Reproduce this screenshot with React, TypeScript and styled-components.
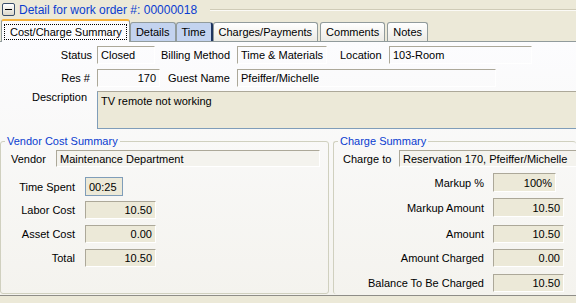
import React from 'react'
import styled, { createGlobalStyle } from 'styled-components'

const GlobalStyle = createGlobalStyle`
  html, body {
    margin: 0;
    padding: 0;
    background: #ece9d8;
  }
  body {
    font-family: 'Liberation Sans', Arial, sans-serif;
    font-size: 11px;
    color: #000;
  }
`

const Window = styled.div`
  width: 576px;
  height: 303px;
  overflow: hidden;
  background: #ece9d8;
  display: flex;
  flex-direction: column;
`

const Header = styled.div`
  height: 17px;
  display: flex;
  align-items: center;
  padding-left: 2px;
  margin-top: 1px;
`

const Toggle = styled.div`
  width: 11px;
  height: 11px;
  border: 1px solid #3b4f6b;
  border-radius: 2px;
  background: linear-gradient(#ffffff, #dcd9cc);
  display: flex;
  align-items: center;
  justify-content: center;
  &::after {
    content: '';
    width: 7px;
    height: 1px;
    background: #000;
  }
`

const HeaderTitle = styled.span`
  margin-left: 4px;
  color: #0a3cd0;
  font-size: 12px;
  white-space: nowrap;
`

const HeaderRule = styled.div`
  flex: 1;
  margin-left: 13px;
  height: 0;
  border-top: 1px solid #cfcbb7;
  border-bottom: 1px solid #fbfaf6;
`

const TabStrip = styled.div`
  display: flex;
  align-items: flex-end;
  height: 22px;
  padding-left: 1px;
  margin-top: 1px;
  position: relative;
  z-index: 1;
`

const Tab = styled.div<{ $kind: 'active' | 'blue' | 'plain'; $edge?: boolean }>`
  height: ${({ $kind }) => ($kind === 'active' ? '21px' : '18px')};
  display: flex;
  align-items: center;
  justify-content: center;
  padding: 0 ${({ $kind }) => ($kind === 'active' ? '2px' : '5px')};
  margin-right: ${({ $kind }) => ($kind === 'plain' ? '2px' : '0')};
  border: 1px solid #919b9c;
  border-bottom: none;
  border-radius: 3px 3px 0 0;
  border-top: ${({ $kind }) =>
    $kind === 'active' ? '2px solid #f7b23a' : '1px solid #919b9c'};
  border-right: ${({ $edge }) => ($edge ? '2px solid #1f3560' : '1px solid #919b9c')};
  background: ${({ $kind }) =>
    $kind === 'active'
      ? '#fcfcfe'
      : $kind === 'blue'
        ? '#c3d3ef'
        : 'linear-gradient(#ffffff, #ecebe5)'};
  margin-bottom: ${({ $kind }) => ($kind === 'active' ? '-1px' : '0')};
  white-space: nowrap;
`

const FocusText = styled.span`
  border: 1px dotted #000;
  padding: 1px 4px 1px 5px;
`

const Panel = styled.div`
  height: 255px;
  border-top: 1px solid #919b9c;
  border-bottom: 1px solid #8e8d88;
  background: linear-gradient(#fcfcfe, #f4f3ee);
  display: flex;
  flex-direction: column;
  padding-top: 4px;
  box-sizing: border-box;
`

const Row = styled.div<{ $gap?: number; $top?: boolean }>`
  display: flex;
  align-items: ${({ $top }) => ($top ? 'flex-start' : 'center')};
  margin-bottom: ${({ $gap }) => $gap ?? 0}px;
`

const Label = styled.div<{ $w: number; $right?: boolean; $pl?: number; $pr?: number }>`
  width: ${({ $w }) => $w}px;
  flex: none;
  box-sizing: border-box;
  text-align: ${({ $right }) => ($right ? 'right' : 'left')};
  padding-left: ${({ $pl }) => $pl ?? 0}px;
  padding-right: ${({ $pr }) => $pr ?? 0}px;
  white-space: nowrap;
`

const Field = styled.div<{
  $w: number
  $h?: number
  $right?: boolean
  $ml?: number
  $tone?: 'flat' | 'soft' | 'beige' | 'blue'
}>`
  width: ${({ $w }) => $w}px;
  height: ${({ $h }) => $h ?? 18}px;
  margin-left: ${({ $ml }) => $ml ?? 0}px;
  flex: none;
  box-sizing: border-box;
  display: flex;
  align-items: center;
  justify-content: ${({ $right }) => ($right ? 'flex-end' : 'flex-start')};
  padding: 0 ${({ $right }) => ($right ? '3px' : '0')} 0 ${({ $right }) => ($right ? '0' : '3px')};
  white-space: nowrap;
  overflow: hidden;
  background: ${({ $tone }) =>
    $tone === 'beige' || $tone === 'blue'
      ? '#ece9d8'
      : $tone === 'soft'
        ? '#f4f3ee'
        : 'transparent'};
  border: 1px solid;
  border-color: ${({ $tone }) =>
    $tone === 'blue' ? '#7f9db9' : '#aca899 #ffffff #ffffff #aca899'};
`

const DescBox = styled.div`
  width: 480px;
  height: 38px;
  flex: none;
  box-sizing: border-box;
  background: #ece9d8;
  border: 1px solid #7f9db9;
  border-top-color: #aca899;
  padding: 3px 3px;
`

const Groups = styled.div`
  display: flex;
  margin-top: 6px;
  padding-bottom: 1px;
  flex: 1;
  min-height: 0;
`

const Group = styled.fieldset<{ $w: number; $open?: boolean }>`
  width: ${({ $w }) => $w}px;
  box-sizing: border-box;
  margin: 0 0 0 ${({ $open }) => ($open ? '4px' : '0')};
  padding: 0;
  border: 1px solid #d0d0bf;
  border-right-width: ${({ $open }) => ($open ? '0' : '1px')};
  border-bottom-width: ${({ $open }) => ($open ? '0' : '1px')};
  border-radius: 3px;
  min-width: 0;
`

const Legend = styled.legend`
  color: #0a3cd0;
  font-size: 11px;
  padding: 0 2px;
  margin-left: 4px;
`

const GroupBody = styled.div<{ $pl: number }>`
  display: flex;
  flex-direction: column;
  padding: 3px 0 0 ${({ $pl }) => $pl}px;
`

const vendorRows = [
  { label: 'Labor Cost', value: '10.50' },
  { label: 'Asset Cost', value: '0.00' },
  { label: 'Total', value: '10.50' },
]

const chargeRows = [
  { label: 'Markup %', value: '100%', w: 63, h: 19, gap: 6 },
  { label: 'Markup Amount', value: '10.50', w: 71, h: 19, gap: 8 },
  { label: 'Amount', value: '10.50', w: 71, h: 18, gap: 6 },
  { label: 'Amount Charged', value: '0.00', w: 71, h: 18, gap: 7 },
  { label: 'Balance To Be Charged', value: '10.50', w: 71, h: 18, gap: 0 },
]

export default function App(): JSX.Element {
  return (
    <Window>
      <GlobalStyle />
      <Header>
        <Toggle />
        <HeaderTitle>Detail for work order #: 00000018</HeaderTitle>
        <HeaderRule />
      </Header>
      <TabStrip>
        <Tab $kind="active">
          <FocusText>Cost/Charge Summary</FocusText>
        </Tab>
        <Tab $kind="blue">Details</Tab>
        <Tab $kind="blue" $edge>
          Time
        </Tab>
        <Tab $kind="plain">Charges/Payments</Tab>
        <Tab $kind="plain">Comments</Tab>
        <Tab $kind="plain">Notes</Tab>
      </TabStrip>
      <Panel>
        <Row $gap={5}>
          <Label $w={97} $right $pr={5}>
            Status
          </Label>
          <Field $w={58}>Closed</Field>
          <Label $w={82} $pl={6}>
            Billing Method
          </Label>
          <Field $w={90}>Time &amp; Materials</Field>
          <Label $w={62} $pl={13}>
            Location
          </Label>
          <Field $w={143}>103-Room</Field>
        </Row>
        <Row $gap={4}>
          <Label $w={97} $right $pr={7}>
            Res #
          </Label>
          <Field $w={63} $right>
            170
          </Field>
          <Label $w={77} $pl={8}>
            Guest Name
          </Label>
          <Field $w={259}>Pfeiffer/Michelle</Field>
        </Row>
        <Row $top>
          <Label $w={97} $pl={32}>
            Description
          </Label>
          <DescBox>TV remote not working</DescBox>
        </Row>
        <Groups>
          <Group $w={329}>
            <Legend>Vendor Cost Summary</Legend>
            <GroupBody $pl={10}>
              <Row $gap={10}>
                <Label $w={45}>Vendor</Label>
                <Field $w={264} $h={17} $tone="soft">
                  Maintenance Department
                </Field>
              </Row>
              <Row $gap={5}>
                <Label $w={64} $right>
                  Time Spent
                </Label>
                <Field $w={38} $h={19} $ml={10} $tone="blue">
                  00:25
                </Field>
              </Row>
              {vendorRows.map((r) => (
                <Row key={r.label} $gap={6}>
                  <Label $w={64} $right>
                    {r.label}
                  </Label>
                  <Field $w={71} $ml={10} $right $tone="beige">
                    {r.value}
                  </Field>
                </Row>
              ))}
            </GroupBody>
          </Group>
          <Group $w={243} $open>
            <Legend>Charge Summary</Legend>
            <GroupBody $pl={9}>
              <Row $gap={6}>
                <Label $w={56}>Charge to</Label>
                <Field $w={180} $h={17} $tone="soft">
                  Reservation 170, Pfeiffer/Michelle
                </Field>
              </Row>
              {chargeRows.map((r) => (
                <Row key={r.label} $gap={r.gap}>
                  <Label $w={141} $right>
                    {r.label}
                  </Label>
                  <Field $w={r.w} $h={r.h} $ml={9} $right $tone="beige">
                    {r.value}
                  </Field>
                </Row>
              ))}
            </GroupBody>
          </Group>
        </Groups>
      </Panel>
    </Window>
  )
}
